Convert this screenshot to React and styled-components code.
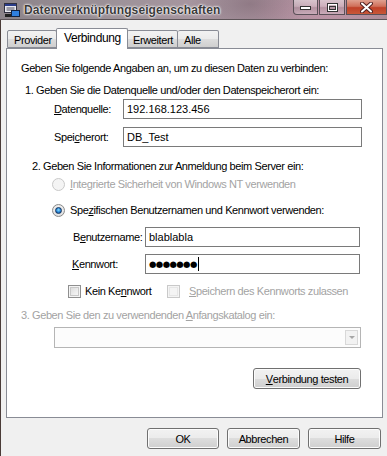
import styled, { createGlobalStyle } from 'styled-components';

const GlobalStyle = createGlobalStyle`
  html, body {
    margin: 0;
    padding: 0;
    background: #f0f0f0;
  }
  body {
    font-family: "Liberation Sans", Arial, sans-serif;
    font-size: 11px;
    letter-spacing: -0.4px;
    color: #000;
  }
`;

const Window = styled.div`
  width: 387px;
  height: 456px;
  display: flex;
  flex-direction: column;
  overflow: hidden;
`;

const TitleBar = styled.div`
  height: 20px;
  display: flex;
  align-items: flex-start;
  background:
    radial-gradient(ellipse 60px 30px at 250px 4px, rgba(90, 70, 80, 0.35), transparent),
    radial-gradient(ellipse 80px 20px at 330px 10px, rgba(200, 150, 170, 0.5), transparent),
    linear-gradient(90deg, #8b8389 0%, #9d9299 30%, #ab97a2 60%, #b592a2 85%, #a98a96 100%);
  border-bottom: 1px solid #5e5559;
  box-sizing: border-box;
`;

const AppIcon = styled.svg`
  margin: 3px 0 0 4px;
  flex: none;
`;

const TitleText = styled.div`
  margin: 3px 0 0 4px;
  font-size: 12px;
  font-weight: bold;
  letter-spacing: 0.1px;
  color: #3a3a3a;
  text-shadow: 0 0 3px #fff, 0 0 2px #fff, 0 0 1px #fff;
`;

const Controls = styled.div`
  margin-left: auto;
  display: flex;
  gap: 1px;
`;

const CtrlButton = styled.div`
  width: ${p => p.$w}px;
  height: 15px;
  box-sizing: border-box;
  border: 1px solid #5a5058;
  border-top: none;
  border-radius: ${p => (p.$first ? '0 0 0 4px' : '0')};
  background: ${p =>
    p.$close
      ? 'linear-gradient(#e0a090 0%, #d0705a 45%, #c04028 55%, #c85838 100%)'
      : 'linear-gradient(rgba(255,255,255,0.45) 0%, rgba(255,255,255,0.25) 45%, rgba(160,140,150,0.3) 55%, rgba(220,200,210,0.45) 100%)'};
  display: flex;
  align-items: center;
  justify-content: center;
`;

const Body = styled.div`
  flex: 1;
  display: flex;
  flex-direction: column;
  padding-top: 8px;
  border-left: 1px solid #4a3c38;
`;

const TabStrip = styled.div`
  display: flex;
  align-items: flex-end;
  height: 20px;
  padding-left: 6px;
  position: relative;
  z-index: 1;
`;

const Tab = styled.div`
  box-sizing: border-box;
  width: ${p => p.$w}px;
  height: ${p => (p.$active ? 21 : 18)}px;
  margin: ${p => (p.$active ? '0 -1px -1px -1px' : '0')};
  padding: ${p => (p.$active ? '2px 0 0 7px' : '2px 0 0 6px')};
  border: 1px solid #898c95;
  border-bottom: ${p => (p.$active ? 'none' : '1px solid #898c95')};
  border-left: ${p => (p.$active || p.$first ? '1px solid #898c95' : 'none')};
  border-radius: 2px 2px 0 0;
  background: ${p =>
    p.$active ? '#fff' : 'linear-gradient(#f2f2f2 0%, #ebebeb 50%, #dddddd 50%, #cfcfcf 100%)'};
  line-height: 14px;
  font-size: ${p => (p.$active ? 12 : 11)}px;
  position: relative;
  z-index: ${p => (p.$active ? 2 : 1)};
`;

const Panel = styled.div`
  margin-left: 5px;
  width: 377px;
  height: 370px;
  box-sizing: border-box;
  border: 1px solid #898c95;
  background: #fff;
  display: flex;
  flex-direction: column;
  padding-top: 13px;
`;

const Line = styled.div`
  line-height: 13px;
  height: 13px;
  white-space: nowrap;
  margin-top: ${p => p.$mt || 0}px;
  margin-left: ${p => p.$ml || 0}px;
  color: ${p => (p.$disabled ? '#a3a3a3' : '#000')};
`;

const FieldRow = styled.div`
  display: flex;
  align-items: center;
  margin-top: ${p => p.$mt}px;
  margin-left: ${p => p.$ml}px;
`;

const Label = styled.label`
  width: ${p => p.$w}px;
  flex: none;
  line-height: 13px;
  white-space: nowrap;
`;

const TextBox = styled.div`
  width: ${p => p.$w}px;
  height: 20px;
  box-sizing: border-box;
  border: 1px solid #7a7a7a;
  background: #fff;
  padding-left: 3px;
  display: flex;
  align-items: center;
  font-size: 11px;
  letter-spacing: 0;
  white-space: nowrap;
`;

const Dots = styled.span`
  font-family: "DejaVu Sans", sans-serif;
  font-size: 8.5px;
  letter-spacing: -0.6px;
`;

const Caret = styled.span`
  display: inline-block;
  width: 1px;
  height: 14px;
  background: #000;
  margin-left: 1px;
`;

const OptionRow = styled.div`
  display: flex;
  align-items: center;
  height: 16px;
  margin-top: ${p => p.$mt}px;
  margin-left: ${p => p.$ml}px;
  color: ${p => (p.$disabled ? '#a3a3a3' : '#000')};
  white-space: nowrap;
`;

const CheckItem = styled.div`
  display: flex;
  align-items: center;
  width: ${p => (p.$w ? `${p.$w}px` : 'auto')};
  color: ${p => (p.$disabled ? '#a3a3a3' : '#000')};
`;

const Radio = styled.span`
  width: 13px;
  height: 13px;
  box-sizing: border-box;
  border-radius: 50%;
  border: 1px solid ${p => (p.$disabled ? '#c9c9c9' : '#8a8a8a')};
  background: ${p =>
    p.$disabled
      ? '#f4f4f4'
      : 'radial-gradient(circle at 50% 40%, #fbfbfb 0%, #e6e6e6 60%, #cfcfcf 100%)'};
  display: flex;
  align-items: center;
  justify-content: center;
  margin-right: 5px;
  flex: none;
  &::after {
    content: '';
    display: ${p => (p.$checked ? 'block' : 'none')};
    width: 7px;
    height: 7px;
    box-sizing: border-box;
    border-radius: 50%;
    border: 1px solid #12335e;
    background: radial-gradient(circle at 50% 40%, #8fe0ff 0%, #2a8ad8 50%, #0f3f8a 100%);
  }
`;

const CheckBox = styled.span`
  width: 13px;
  height: 13px;
  box-sizing: border-box;
  border: 1px solid ${p => (p.$disabled ? '#c9c9c9' : '#8f8f8f')};
  background: ${p =>
    p.$disabled ? '#f4f4f4' : 'linear-gradient(135deg, #d6d6d6 0%, #eeeeee 60%, #fbfbfb 100%)'};
  box-shadow: inset 0 0 0 1px #f4f4f4,
    inset 0 0 0 2px ${p => (p.$disabled ? '#e6e6e6' : '#c8c8c8')};
  margin-right: ${p => p.$mr}px;
  flex: none;
`;

const Combo = styled.div`
  width: 307px;
  height: 21px;
  box-sizing: border-box;
  border: 1px solid #b5b5b5;
  background: #fcfcfc;
  margin-top: 5px;
  margin-left: 47px;
  display: flex;
  justify-content: flex-end;
  padding: 2px;
`;

const ComboArrow = styled.div`
  width: 13px;
  box-sizing: border-box;
  border: 1px solid #d8d8d8;
  background: #f2f2f2;
  display: flex;
  align-items: center;
  justify-content: center;
  &::after {
    content: '';
    border-left: 3px solid transparent;
    border-right: 3px solid transparent;
    border-top: 3px solid #a6a6a6;
  }
`;

const Button = styled.div`
  width: ${p => p.$w}px;
  height: 21px;
  box-sizing: border-box;
  border: 1px solid #707070;
  border-radius: 3px;
  background: linear-gradient(#f2f2f2 0%, #ebebeb 50%, #dddddd 50%, #cfcfcf 100%);
  box-shadow: inset 0 0 0 1px #fcfcfc;
  display: flex;
  align-items: center;
  justify-content: center;
  font-size: 11px;
  white-space: nowrap;
`;

const TestRow = styled.div`
  display: flex;
  justify-content: flex-end;
  margin-top: 20px;
  margin-right: 21px;
`;

const Footer = styled.div`
  display: flex;
  justify-content: flex-end;
  gap: 8px;
  margin-top: 10px;
  padding-right: 6px;
`;

const Key = styled.u`
  text-decoration: underline;
  text-underline-offset: 1px;
`;

function TitleIcon() {
  return (
    <AppIcon width="16" height="15" viewBox="0 0 16 15">
      <rect x="0.5" y="0.5" width="12" height="9" fill="#e8e8f0" stroke="#303040" />
      <rect x="1" y="1" width="11" height="2" fill="#2a3c8a" />
      <path d="M2.5 5h8M2.5 7h8" stroke="#505060" />
      <rect x="7.5" y="7.5" width="8" height="6" fill="#2f7fe0" stroke="#102040" />
      <rect x="1" y="11" width="6" height="3" fill="#202020" />
    </AppIcon>
  );
}

export default function App() {
  return (
    <>
      <GlobalStyle />
      <Window>
        <TitleBar>
          <TitleIcon />
          <TitleText>Datenverknüpfungseigenschaften</TitleText>
          <Controls>
            <CtrlButton $w={25} $first>
              <svg width="11" height="5" viewBox="0 0 11 5">
                <rect x="0.5" y="1.5" width="10" height="3" fill="#fff" stroke="#333" />
              </svg>
            </CtrlButton>
            <CtrlButton $w={26}>
              <svg width="11" height="9" viewBox="0 0 11 9">
                <rect x="0.5" y="0.5" width="10" height="8" fill="none" stroke="#333" />
                <rect x="1.5" y="1.5" width="8" height="6" fill="none" stroke="#fff" />
                <rect x="2.5" y="3.5" width="6" height="3" fill="none" stroke="#333" />
              </svg>
            </CtrlButton>
            <CtrlButton $w={41} $close>
              <svg width="13" height="11" viewBox="0 0 13 11">
                <path d="M2 1.5l9 8M11 1.5l-9 8" stroke="#502020" strokeWidth="4" strokeLinecap="round" />
                <path d="M2 1.5l9 8M11 1.5l-9 8" stroke="#fff" strokeWidth="2" strokeLinecap="round" />
              </svg>
            </CtrlButton>
          </Controls>
        </TitleBar>

        <Body>
          <TabStrip>
            <Tab $first $w={50}>Provider</Tab>
            <Tab $active $w={72}>Verbindung</Tab>
            <Tab $w={51}>Erweitert</Tab>
            <Tab $w={41}>Alle</Tab>
          </TabStrip>

          <Panel>
            <Line $ml={14}>Geben Sie folgende Angaben an, um zu diesen Daten zu verbinden:</Line>
            <Line $ml={18} $mt={9}>1. Geben Sie die Datenquelle und/oder den Datenspeicherort ein:</Line>

            <FieldRow $mt={2} $ml={47}>
              <Label $w={69}><Key>D</Key>atenquelle:</Label>
              <TextBox $w={239}>192.168.123.456</TextBox>
            </FieldRow>
            <FieldRow $mt={8} $ml={47}>
              <Label $w={69}>Spei<Key>c</Key>herort:</Label>
              <TextBox $w={239}>DB_Test</TextBox>
            </FieldRow>

            <Line $ml={25} $mt={13}>2. Geben Sie Informationen zur Anmeldung beim Server ein:</Line>
            <OptionRow $mt={3} $ml={45} $disabled>
              <Radio $disabled />
              <span><Key>I</Key>ntegrierte Sicherheit von Windows NT verwenden</span>
            </OptionRow>
            <OptionRow $mt={10} $ml={45}>
              <Radio $checked />
              <span>Spe<Key>z</Key>ifischen Benutzernamen und Kennwort verwenden:</span>
            </OptionRow>

            <FieldRow $mt={9} $ml={66}>
              <Label $w={72}>B<Key>e</Key>nutzername:</Label>
              <TextBox $w={215}>blablabla</TextBox>
            </FieldRow>
            <FieldRow $mt={7} $ml={65}>
              <Label $w={73}><Key>K</Key>ennwort:</Label>
              <TextBox $w={215}>
                <Dots>●●●●●●●</Dots>
                <Caret />
              </TextBox>
            </FieldRow>

            <OptionRow $mt={9} $ml={61}>
              <CheckItem $w={99}>
                <CheckBox $mr={4} />
                <span>Kein Ke<Key>n</Key>nwort</span>
              </CheckItem>
              <CheckItem $disabled>
                <CheckBox $mr={9} $disabled />
                <span><Key>S</Key>peichern des Kennworts zulassen</span>
              </CheckItem>
            </OptionRow>

            <Line $ml={14} $mt={10} $disabled>
              3. Geben Sie den zu verwendenden <Key>A</Key>nfangskatalog ein:
            </Line>
            <Combo>
              <ComboArrow />
            </Combo>

            <TestRow>
              <Button $w={108}><Key>V</Key>erbindung testen</Button>
            </TestRow>
          </Panel>

          <Footer>
            <Button $w={72}>OK</Button>
            <Button $w={73}>Abbrechen</Button>
            <Button $w={73}>Hilfe</Button>
          </Footer>
        </Body>
      </Window>
    </>
  );
}
